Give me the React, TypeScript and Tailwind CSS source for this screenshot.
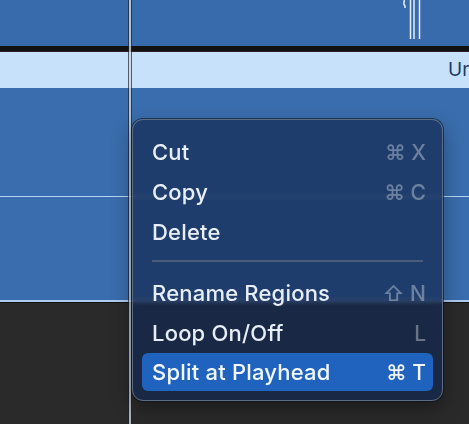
import React from "react";

type MenuItem = {
  label: string;
  shortcut?: string;
  active?: boolean;
};

const TOP_ITEMS: MenuItem[] = [
  { label: "Cut", shortcut: "⌘ X" },
  { label: "Copy", shortcut: "⌘ C" },
  { label: "Delete" },
];

const BOTTOM_ITEMS: MenuItem[] = [
  { label: "Rename Regions", shortcut: "⇧ N" },
  { label: "Loop On/Off", shortcut: "L" },
  { label: "Split at Playhead", shortcut: "⌘ T", active: true },
];

function MenuRow({ item }: { item: MenuItem }) {
  return (
    <div
      className={`flex items-center justify-between rounded-[6px] pl-[10px] pr-[7px] ${
        item.active ? "h-[38px] bg-[#1f63be] text-[#f3f7fd]" : "h-10 text-[#e8eef7]"
      }`}
    >
      <span className="text-[22px] font-medium leading-none tracking-[0.2px]">{item.label}</span>
      {item.shortcut ? (
        <span
          className={`text-[21px] font-medium leading-none ${
            item.active ? "text-[#f3f7fd]" : "text-white/35"
          }`}
          style={{ fontFamily: "Inter, 'DejaVu Sans', sans-serif" }}
        >
          {item.shortcut}
        </span>
      ) : null}
    </div>
  );
}

function Waveform() {
  return (
    <svg width="30" height="40" viewBox="0 0 30 40" className="absolute left-[400px] top-0">
      <path d="M4.5 0 Q3 4 5 6 L5 8" stroke="#e6eefa" strokeWidth="1.5" fill="none" />
      <line x1="10.5" y1="0" x2="10.5" y2="39" stroke="#e6eefa" strokeWidth="1.5" />
      <line x1="14" y1="0" x2="14" y2="39" stroke="#e6eefa" strokeWidth="1.5" />
      <line x1="19.5" y1="0" x2="19.5" y2="39" stroke="#e6eefa" strokeWidth="1.5" />
    </svg>
  );
}

export default function App() {
  return (
    <div
      className="relative h-[424px] w-[469px] overflow-hidden bg-[#2a2a2a]"
      style={{ fontFamily: "Inter, 'Liberation Sans', sans-serif" }}
    >
      {/* tracks */}
      <div className="flex flex-col">
        <div className="relative h-[46px] bg-[#386bab]">
          <Waveform />
        </div>
        <div className="h-[5px] bg-[#121212]" />
        <div className="h-px bg-[#2c2020]" />
        <div className="flex h-[36px] items-center overflow-hidden bg-[#c8e1fb] pl-[448px]">
          <span className="whitespace-nowrap text-[19px] text-[#1d3a60]">Un</span>
        </div>
        <div className="h-[108px] bg-[#3a6dad]" />
        <div className="h-px bg-[#b6d6f7]" />
        <div className="h-[103px] bg-[#3a6dad]" />
        <div className="h-[2px] bg-[#aecdf0]" />
        <div className="h-px bg-[#111111]" />
      </div>

      {/* playhead */}
      <div className="absolute bottom-0 left-[128px] top-0 flex">
        <div className="w-px bg-[#1a2230]/70" />
        <div className="w-[2px] bg-[#d4d8de]/80" />
        <div className="w-px bg-[#1a2230]/70" />
      </div>

      {/* context menu */}
      <div className="absolute left-[132px] top-[119px] w-[311px] rounded-[11px] border border-[#5d6d86] bg-[#132850]/70 px-[9px] pb-[9px] pt-3 shadow-[0_0_0_1px_rgba(10,14,24,0.6),0_8px_20px_rgba(0,0,0,0.35)] backdrop-blur-[2px]">
        {TOP_ITEMS.map((item) => (
          <MenuRow key={item.label} item={item} />
        ))}
        <div className="mx-[10px] mb-[11px] mt-2 h-[2px] bg-[#4a5c7a]" />
        {BOTTOM_ITEMS.map((item) => (
          <MenuRow key={item.label} item={item} />
        ))}
      </div>
    </div>
  );
}
